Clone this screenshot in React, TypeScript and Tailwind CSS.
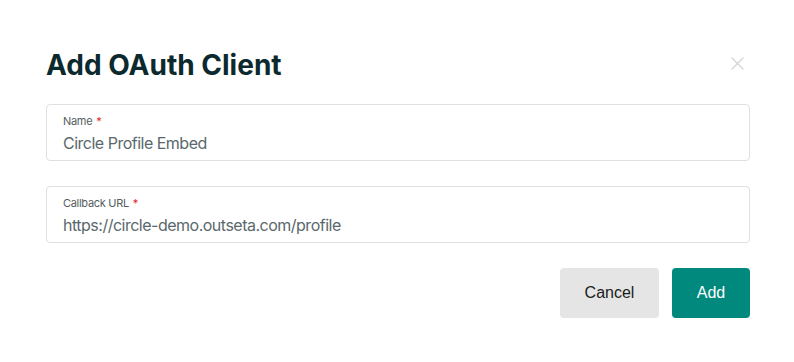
import React from "react";

function Field({ label, value }: { label: string; value: string }) {
  return (
    <div className="h-[57px] rounded-[4px] border border-[#e0e0e0] bg-white px-4 pt-[9px]">
      <div className="flex h-[14px] items-center text-[11px] leading-[14px] tracking-[-0.3px] text-[#555d60]">
        <span>{label}</span>
        <span className="ml-[4px] text-[#e3262b]">*</span>
      </div>
      <div className="mt-[3px] text-[16px] leading-[24px] tracking-[-0.5px] text-[#5a686c]">
        {value}
      </div>
    </div>
  );
}

export default function App() {
  return (
    <div
      className="h-[362px] w-[794px] bg-white"
      style={{ fontFamily: "Inter, 'Noto Sans', sans-serif" }}
    >
      <div className="ml-[46px] w-[704px] pt-[47px]">
        <div className="flex items-center justify-between">
          <h1 className="text-[28px] font-bold leading-[36px] text-[#0c2a2e]">
            Add OAuth Client
          </h1>
          <svg
            width="13"
            height="13"
            viewBox="0 0 13 13"
            className="mb-[4px] mr-[6px]"
            stroke="#d6d6d6"
            strokeWidth="1.4"
            strokeLinecap="round"
          >
            <path d="M1 1 L12 12 M12 1 L1 12" />
          </svg>
        </div>
        <div className="mt-[21px] flex flex-col gap-[25px]">
          <Field label="Name" value="Circle Profile Embed" />
          <Field label="Callback URL" value="https://circle-demo.outseta.com/profile" />
        </div>
        <div
          className="mt-[25px] flex justify-end gap-[13px] text-[16px]"
          style={{ fontFamily: "'Liberation Sans', Arial, sans-serif" }}
        >
          <button className="h-[50px] w-[99px] rounded-[4px] bg-[#e5e5e5] text-[#1b1b1b]">
            Cancel
          </button>
          <button className="h-[50px] w-[78px] rounded-[4px] bg-[#00897c] text-white">
            Add
          </button>
        </div>
      </div>
    </div>
  );
}
